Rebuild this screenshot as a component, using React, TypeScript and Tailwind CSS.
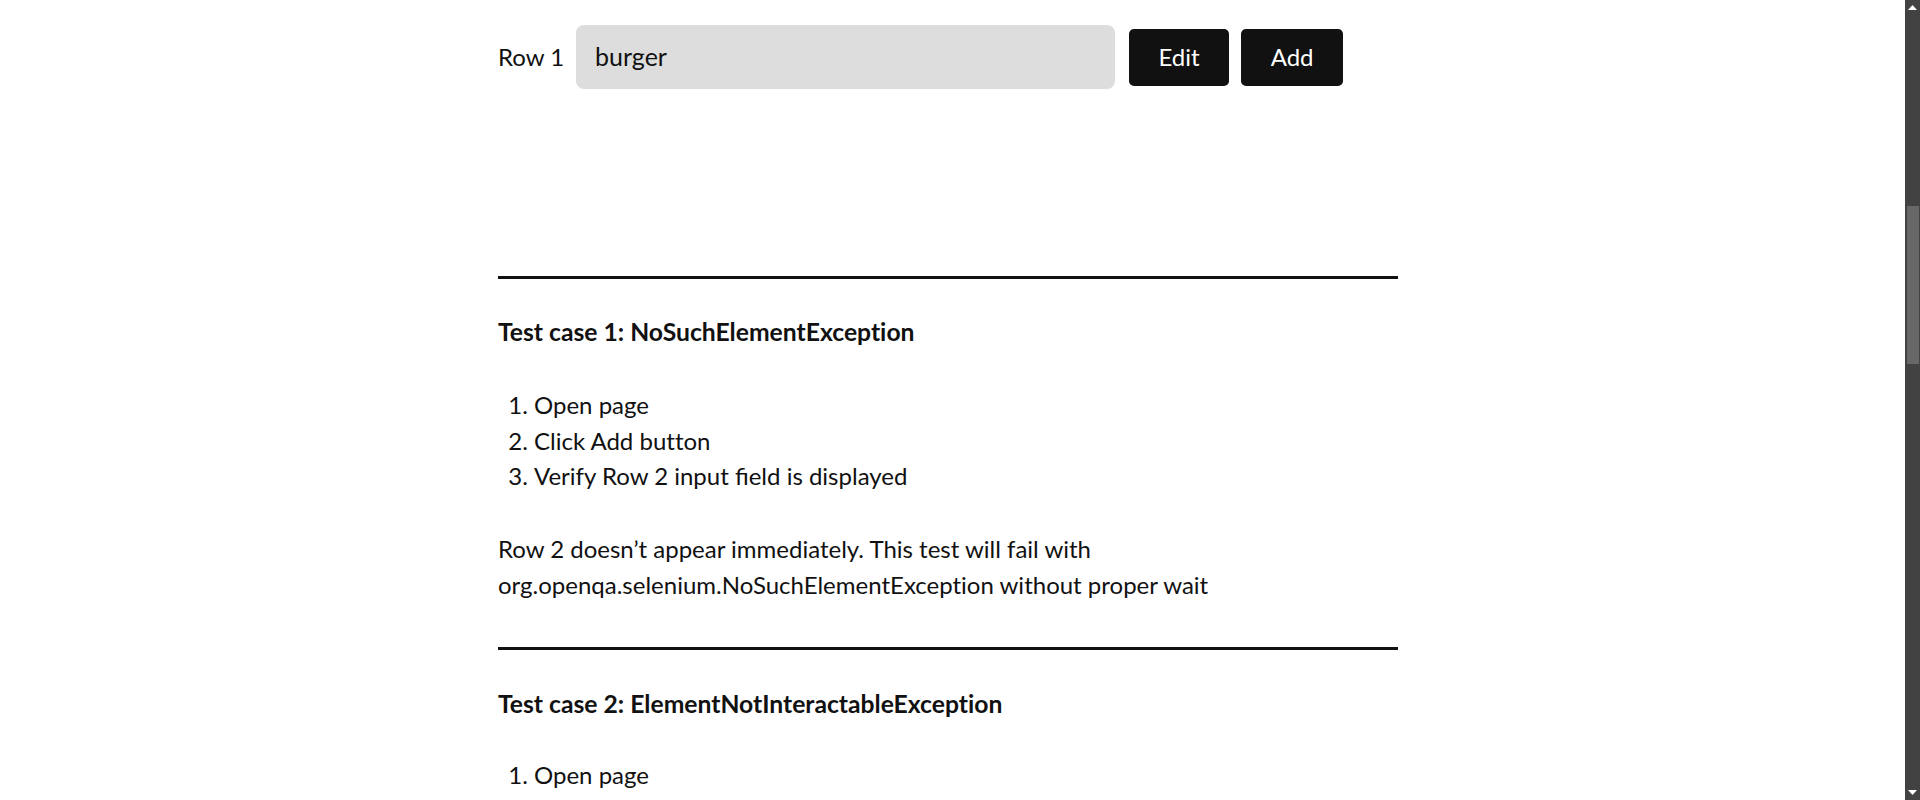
const STEPS_1 = ["Open page", "Click Add button"];

function Scrollbar() {
  return (
    <div className="flex h-[800px] w-[15px] shrink-0 flex-col items-center bg-[#424242]">
      <div className="flex h-[15px] w-full items-center justify-center">
        <svg width="9" height="5" viewBox="0 0 9 5">
          <polygon points="0,5 4.5,0 9,5" fill="#fff" />
        </svg>
      </div>
      <div className="mt-[191px] h-[158px] w-[12px] bg-[#686868]" />
      <div className="flex-1" />
      <div className="flex h-[15px] w-full items-center justify-center">
        <svg width="9" height="5" viewBox="0 0 9 5">
          <polygon points="0,0 9,0 4.5,5" fill="#fff" />
        </svg>
      </div>
    </div>
  );
}

export default function App() {
  return (
    <div
      className="flex h-[800px] w-full overflow-hidden bg-white text-[#111] [font-variant-ligatures:none]"
      style={{ fontFamily: "Lato, 'Noto Sans', sans-serif" }}
    >
      <div className="flex-1 overflow-hidden">
        <div className="ml-[498px] w-[900px]">
          <div className="flex items-center pt-[25px]">
            <span className="mr-[12px] text-[24px] leading-[30px]">Row 1</span>
            <div className="flex h-[64px] w-[539px] items-center rounded-[8px] bg-[#dddddd] px-[19px] text-[25px]">burger</div>
            <button className="ml-[14px] h-[57px] w-[100px] rounded-[5px] bg-[#111] text-[24px] text-white">Edit</button>
            <button className="ml-[12px] h-[57px] w-[102px] rounded-[5px] bg-[#111] text-[24px] text-white">Add</button>
          </div>

          <div className="mt-[187px] h-[3px] bg-[#111]" />
          <h3 className="mt-[35px] text-[24.7px] font-bold leading-[36px]">Test case 1: NoSuchElementException</h3>
          <ol className="mt-[37px] list-decimal pl-[36px] text-[24px] leading-[35.5px]">
            {STEPS_1.map((s) => (
              <li key={s}>{s}</li>
            ))}
            <li>
              Verify Row 2 input <span className="[font-variant-ligatures:common-ligatures]">field</span> is displayed
            </li>
          </ol>
          <p className="mt-[37px] text-[24px] leading-[36.5px]">
            Row 2 doesn’t appear immediately. This test will fail with
            <br />
            org.openqa.selenium.NoSuchElementException without proper wait
          </p>

          <div className="mt-[43px] h-[3px] bg-[#111]" />
          <h3 className="mt-[36px] text-[24.7px] font-bold leading-[36px]">Test case 2: ElementNotInteractableException</h3>
          <ol className="mt-[35px] list-decimal pl-[36px] text-[24px] leading-[35.5px]">
            <li>Open page</li>
            <li>Click Edit button</li>
          </ol>
        </div>
      </div>
      <Scrollbar />
    </div>
  );
}
